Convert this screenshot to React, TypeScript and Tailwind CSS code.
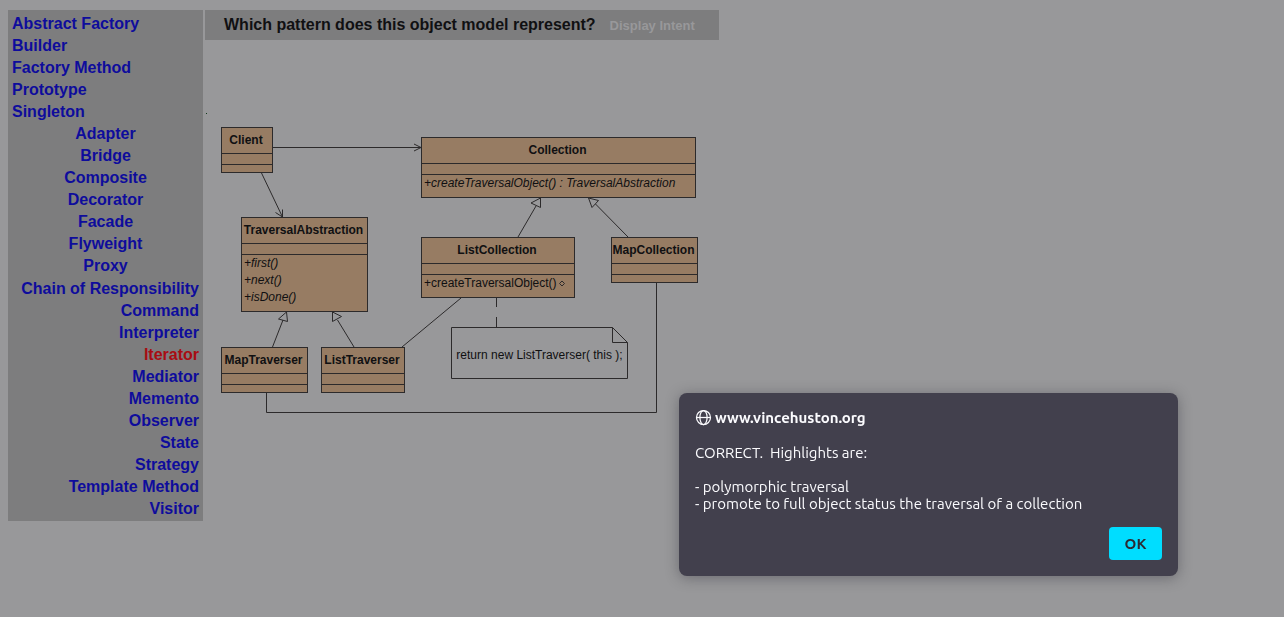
import React from "react";

const creational = ["Abstract Factory", "Builder", "Factory Method", "Prototype", "Singleton"];
const structural = ["Adapter", "Bridge", "Composite", "Decorator", "Facade", "Flyweight", "Proxy"];
const behavioral = [
  "Chain of Responsibility",
  "Command",
  "Interpreter",
  "Iterator",
  "Mediator",
  "Memento",
  "Observer",
  "State",
  "Strategy",
  "Template Method",
  "Visitor",
];

function PatternGroup({ names, align }: { names: string[]; align: string }) {
  return (
    <ul className={align}>
      {names.map((name) => (
        <li key={name}>
          <a href="#answer" className={name === "Iterator" ? "text-[#a80c12]" : "text-[#0e0c9c]"}>
            {name}
          </a>
        </li>
      ))}
    </ul>
  );
}

type NodeProps = {
  name: string;
  place: string;
  children?: React.ReactNode;
};

function ClassNode({ name, place, children }: NodeProps) {
  return (
    <div className={`absolute border border-[#2c2a2b] bg-[#977c63] text-[12px] leading-[17px] whitespace-nowrap ${place}`}>
      <div className="flex h-[26px] items-center justify-center border-b border-[#2c2a2b] pr-[2px] font-bold">
        {name}
      </div>
      <div className="h-[11px] border-b border-[#2c2a2b]" />
      <div className="min-h-[7px] pl-[2px]">{children}</div>
    </div>
  );
}

function Diagram() {
  return (
    <div className="relative mt-[72px] h-[305px] w-[514px] text-[#101012]">
      <svg
        className="absolute inset-0"
        width="514"
        height="305"
        fill="none"
        stroke="#2c2a2b"
        strokeWidth="1"
        aria-hidden="true"
      >
        <rect x="1" y="1" width="1" height="1" fill="#123a1c" stroke="none" />
        <path d="M68 35.5H216M209 32l7 3.5-7 3.5" />
        <path d="M56.500 61L77.500 105M70.500 100.500L77.500 105L77.500 97.500" />
        <path d="M81.500 200L73.500 207L82.500 209.500ZM78 208L67.500 235" />
        <path d="M127.500 200V209.500L136.500 204.500ZM132.500 208L149 235" />
        <path d="M256 186L197 235" />
        <path d="M335.500 86L326 91L335.500 95.500ZM331 94L313 125" />
        <path d="M383.500 86L393.500 88.500L387 95.500ZM390.500 92L423 125" />
        <path d="M291.500 186V195M291.500 205V215" />
        <path d="M451.500 171V300.500H61.500V281" />
        <path d="M246.500 215.500H407.500L422.500 230.500V266.500H246.500ZM407.500 215.500V230.500H422.500" />
      </svg>
      <ClassNode name="Client" place="left-[16px] top-[15px] w-[52px]" />
      <ClassNode name="Collection" place="left-[216px] top-[25px] w-[275px]">
        <p className="pb-[5px] italic">+createTraversalObject() : TraversalAbstraction</p>
      </ClassNode>
      <ClassNode name="TraversalAbstraction" place="left-[36px] top-[105px] w-[127px]">
        <div className="pb-[5px] italic">
          <p>+first()</p>
          <p>+next()</p>
          <p>+isDone()</p>
        </div>
      </ClassNode>
      <ClassNode name="ListCollection" place="left-[216px] top-[125px] w-[154px]">
        <p className="flex items-center gap-[2px] pb-[5px]">
          +createTraversalObject()
          <svg width="6" height="7" viewBox="0 0 6 7" fill="none" stroke="#2c2a2b" aria-hidden="true">
            <path d="M3 1L5.500 3.500L3 6L.5 3.500Z" />
          </svg>
        </p>
      </ClassNode>
      <ClassNode name="MapCollection" place="left-[406px] top-[125px] w-[87px]" />
      <ClassNode name="MapTraverser" place="left-[16px] top-[235px] w-[87px]" />
      <ClassNode name="ListTraverser" place="left-[116px] top-[235px] w-[84px]" />
      <p className="absolute left-[246px] top-[215px] flex h-[52px] w-[177px] items-center justify-center pt-[4px] text-[12px] leading-[17px] whitespace-nowrap">
        return new ListTraverser( this );
      </p>
    </div>
  );
}

function GlobeIcon() {
  return (
    <svg width="17" height="17" viewBox="0 0 17 17" fill="none" stroke="#fbfbfe" strokeWidth="1.25" aria-hidden="true">
      <circle cx="8.5" cy="8.5" r="7" />
      <ellipse cx="8.5" cy="8.500" rx="3.600" ry="7" />
      <path d="M1.500 8.500H15.500" />
    </svg>
  );
}

export default function App() {
  return (
    <div className="min-h-screen bg-[#98989a] px-2 pt-[10px] font-['Liberation_Sans',Arial,sans-serif]">
      <div className="flex items-start gap-[2px]">
        <nav className="flex w-[195px] shrink-0 flex-col bg-[#7d7d7e] px-1 pt-[3px] pb-px text-base leading-[22px] font-bold">
          <PatternGroup names={creational} align="text-left" />
          <PatternGroup names={structural} align="text-center" />
          <PatternGroup names={behavioral} align="mt-px text-right" />
        </nav>
        <main>
          <header className="flex h-[30px] w-[514px] items-baseline gap-[14px] bg-[#7d7d7e] pt-[3px] pl-[19px] font-bold">
            <h1 className="text-base text-[#101012]">Which pattern does this object model represent?</h1>
            <button type="button" className="text-[13px] text-[#98989a]">
              Display Intent
            </button>
          </header>
          <Diagram />
        </main>
      </div>

      <div
        role="dialog"
        aria-labelledby="dialog-site"
        className="fixed right-[106px] bottom-[41px] w-[499px] rounded-lg bg-[#42404d] p-4 font-[Ubuntu,'Noto_Sans',sans-serif] text-[15px] leading-[17px] text-[#fbfbfe] shadow-[0_2px_14px_rgba(40,40,50,0.4)]"
      >
        <h2 id="dialog-site" className="flex items-center gap-[3px] font-bold">
          <GlobeIcon />
          www.vincehuston.org
        </h2>
        <p className="mt-[18px] whitespace-pre-wrap">
          {"CORRECT.  Highlights are:\n\n- polymorphic traversal\n- promote to full object status the traversal of a collection"}
        </p>
        <div className="mt-[15px] flex justify-end">
          <button type="button" className="h-[33px] w-[53px] rounded bg-[#00ddff] font-bold text-[#2b2a33]">
            OK
          </button>
        </div>
      </div>
    </div>
  );
}
